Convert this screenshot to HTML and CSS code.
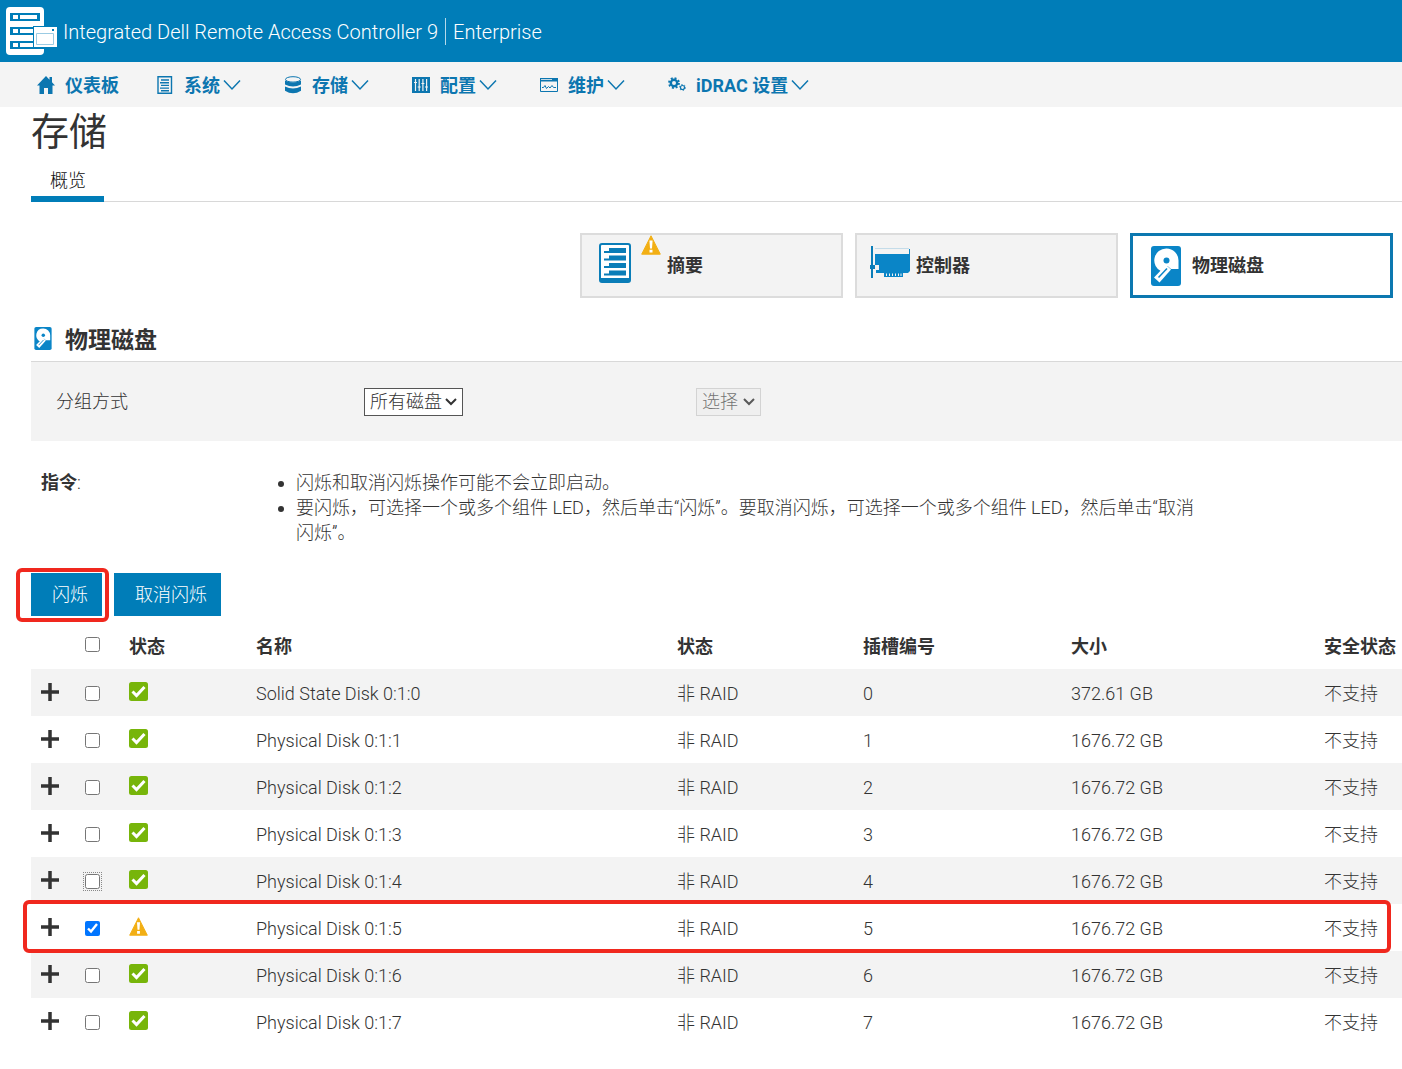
FILE: index.html
```html
<!DOCTYPE html>
<html lang="zh-CN">
<head>
<meta charset="utf-8">
<meta name="viewport" content="width=device-width, initial-scale=1">
<title>iDRAC9 - 存储</title>
<link rel="stylesheet" href="styles.css">
</head>
<body>
<svg class="sprite" aria-hidden="true">
  <symbol id="i-chevron" viewBox="0 0 18 12"><path d="M1 1.5l8 8.5 8-8.5" fill="none" stroke="currentColor" stroke-width="1.5"/></symbol>
  <symbol id="i-plus" viewBox="0 0 18 18"><path d="M9 0v18M0 9h18" stroke="currentColor" stroke-width="3.500"/></symbol>
  <symbol id="i-ok" viewBox="0 0 19 19"><rect width="19" height="19" rx="2.500" fill="#77b50a"/><path d="M3.500 9.500l4 4 8-8.600" fill="none" stroke="#fff" stroke-width="3"/></symbol>
  <symbol id="i-warn" viewBox="0 0 20 20"><path d="M10 .8L19.300 19.200H.7z" fill="#f2af14" stroke="#f2af14" stroke-width="1" stroke-linejoin="round"/><path d="M8.400 5.500h3.200l-.6 8H9zM8.500 14.800h3v2.700h-3z" fill="#fff"/></symbol>
  <symbol id="i-disk" viewBox="0 0 30 40"><rect width="30" height="40" rx="3" fill="#0a85c7"/><path d="M15.500 2.500A12 12 0 0 1 27.500 14.500V23H20l-3.500-3-6 5.500A12 12 0 0 1 15.500 2.500z" fill="#fff"/><path d="M3 31.500L15 19l5 4.500L8.500 36.500z" fill="#fff"/><path d="M7.500 31.500l8.500-9" stroke="#0a85c7" stroke-width="1.500"/><circle cx="15.500" cy="14.500" r="3" fill="#0a85c7"/></symbol>
</svg>

<header class="topbar">
  <svg class="logo" viewBox="0 0 51 48" aria-hidden="true">
    <rect width="38" height="48" rx="4" fill="#fff"/>
    <path d="M4 6h30v8H4zM4 20h30v8H4zM4 34h30v8H4z" fill="#007db8"/>
    <path d="M7 8h5v4H7zM14 8h17v4H14zM7 22h5v4H7zM14 22h13v4H14zM7 36h5v4H7zM14 36h13v4H14z" fill="#fff"/>
    <path d="M27 19h24v22H27zM34 40h5v2h-5z" fill="#007db8"/>
    <rect x="28" y="20" width="23" height="20" fill="#fff"/>
    <path d="M30.500 26.500h17v11h-17z" fill="none" stroke="#9bcbe3"/><path d="M46 22h2v2h-2z" fill="#007db8"/>
  </svg>
  <span class="product">Integrated Dell Remote Access Controller 9</span>
  <span class="edition">Enterprise</span>
</header>

<nav class="menu">
  <a href="#"><svg viewBox="0 0 18 18" class="ico"><path d="M9 0L0 9.500h2.500V18H7v-6h4v6h4.500V9.500H18l-3-3.200V1h-2.500v2.700z" fill="currentColor"/></svg>仪表板</a>
  <a href="#"><svg viewBox="0 0 18 18" class="ico"><path d="M2 .7h13.500v16.600H2zM5 4h8M4 6.700h9M5 9.400h8M4 12.100h9M5 14.800h8" fill="none" stroke="currentColor" stroke-width="1.400"/></svg>系统<svg class="chev"><use href="#i-chevron"/></svg></a>
  <a href="#"><svg viewBox="0 0 18 18" class="ico"><ellipse cx="9" cy="3.400" rx="7.500" ry="2.700" fill="none" stroke="currentColor"/><path d="M1 4.500q8 4 16 0v4q-8 4-16 0zM1 10.500q8 4 16 0v4.200q-8 5-16 0z" fill="currentColor"/></svg>存储<svg class="chev"><use href="#i-chevron"/></svg></a>
  <a href="#"><svg viewBox="0 0 18 18" class="ico"><path d="M0 1h18v16H0z" fill="currentColor"/><path d="M3.500 3v12M7.200 3v12M10.900 3v12M14.600 3v12M2 6.500h3M5.700 11h3M9.400 7.500h3M13 11h3" stroke="#f2f2f2" stroke-width="1.200"/></svg>配置<svg class="chev"><use href="#i-chevron"/></svg></a>
  <a href="#"><svg viewBox="0 0 18 18" class="ico"><path d="M.5 2.500h17v13H.5z" fill="none" stroke="currentColor"/><path d="M0 2h18v3.500H0z" fill="currentColor"/><path d="M1 3.500h11" stroke="#f2f2f2" stroke-width=".8"/><path d="M2 11.500h1.500l1.500-2 1.500 3 2-2 1.500 1.500 2-2.500 1.500 2H16" fill="none" stroke="currentColor"/></svg>维护<svg class="chev"><use href="#i-chevron"/></svg></a>
  <a href="#"><svg viewBox="0 0 18 18" class="ico"><circle cx="6" cy="7" r="3.200" fill="none" stroke="currentColor" stroke-width="2.400"/><circle cx="6" cy="7" r="4.900" fill="none" stroke="currentColor" stroke-width="2" stroke-dasharray="1.950 1.900"/><circle cx="14.500" cy="11.500" r="2" fill="none" stroke="currentColor" stroke-width="1.200"/><circle cx="14.500" cy="11.500" r="3" fill="none" stroke="currentColor" stroke-dasharray="1.200 1.940"/></svg>iDRAC 设置<svg class="chev"><use href="#i-chevron"/></svg></a>
</nav>

<main class="page">
  <h1>存储</h1>
  <div class="tabs"><a class="tab" href="#">概览</a></div>

  <div class="tiles">
    <button class="tile" type="button">
      <span class="tile-icon wide"><svg viewBox="0 0 32 40" width="32" height="40"><rect x="1" y="1" width="30" height="38" rx="2" fill="#fff" stroke="#0a7db8" stroke-width="2"/><path d="M1 35h30v4H1z" fill="#0a7db8"/><path d="M10 5h17v5H5V8h5zM10 12.500h17v5H5v-2h5zM10 20h17v5H5v-2h5zM10 27.500h17v5H5v-2h5z" fill="#0a7db8"/></svg><svg class="alert"><use href="#i-warn"/></svg></span>摘要</button>
    <button class="tile" type="button">
      <span class="tile-icon card"><svg viewBox="0 0 40 32" width="40" height="32"><path d="M1 0h2v32H1zM0 19h5v4H0z" fill="#0a7db8"/><path d="M5 2.500h34" fill="none" stroke="#c4dce9"/><path d="M5 8h34V3h1v22l-2 2h-5v4H14v-4H6v-3h3v-5H5z" fill="#0a85c7"/><path d="M16.500 27.500v2.500M19.500 27.500v2.500M22.500 27.500v2.500M25.500 27.500v2.500M28.500 27.500v2.500M31 27.500v2.500" stroke="#f2f2f2"/></svg></span>控制器</button>
    <button class="tile active" type="button">
      <span class="tile-icon disk"><svg width="30" height="40"><use href="#i-disk"/></svg></span>物理磁盘</button>
  </div>

  <h2><svg width="18" height="23"><use href="#i-disk"/></svg>物理磁盘</h2>
  <div class="filter">
    <label for="group">分组方式</label>
    <select id="group"><option>所有磁盘</option></select>
    <select aria-label="选择" disabled><option>选择</option></select>
  </div>

  <div class="notes">
    <div><strong>指令</strong>:</div>
    <ul>
      <li>闪烁和取消闪烁操作可能不会立即启动。</li>
      <li>要闪烁，可选择一个或多个组件 LED，然后单击“闪烁”。要取消闪烁，可选择一个或多个组件 LED，然后单击“取消闪烁”。</li>
    </ul>
  </div>

  <div class="actions">
    <button class="marked" type="button">闪烁</button>
    <button type="button">取消闪烁</button>
  </div>

  <table>
    <colgroup><col class="c-exp"><col class="c-chk"><col class="c-health"><col><col class="c-state"><col class="c-slot"><col class="c-size"><col class="c-sec"></colgroup>
    <thead><tr><th></th><th><input type="checkbox" aria-label="全选"></th><th>状态</th><th>名称</th><th>状态</th><th>插槽编号</th><th>大小</th><th>安全状态</th></tr></thead>
    <tbody>
      <tr><td><button class="expand" type="button" aria-label="展开"><svg><use href="#i-plus"/></svg></button></td><td><input type="checkbox" aria-label="0:1:0"></td><td><svg class="health"><use href="#i-ok"/></svg></td><td>Solid State Disk 0:1:0</td><td>非 RAID</td><td>0</td><td>372.61 GB</td><td>不支持</td></tr>
      <tr><td><button class="expand" type="button" aria-label="展开"><svg><use href="#i-plus"/></svg></button></td><td><input type="checkbox" aria-label="0:1:1"></td><td><svg class="health"><use href="#i-ok"/></svg></td><td>Physical Disk 0:1:1</td><td>非 RAID</td><td>1</td><td>1676.72 GB</td><td>不支持</td></tr>
      <tr><td><button class="expand" type="button" aria-label="展开"><svg><use href="#i-plus"/></svg></button></td><td><input type="checkbox" aria-label="0:1:2"></td><td><svg class="health"><use href="#i-ok"/></svg></td><td>Physical Disk 0:1:2</td><td>非 RAID</td><td>2</td><td>1676.72 GB</td><td>不支持</td></tr>
      <tr><td><button class="expand" type="button" aria-label="展开"><svg><use href="#i-plus"/></svg></button></td><td><input type="checkbox" aria-label="0:1:3"></td><td><svg class="health"><use href="#i-ok"/></svg></td><td>Physical Disk 0:1:3</td><td>非 RAID</td><td>3</td><td>1676.72 GB</td><td>不支持</td></tr>
      <tr><td><button class="expand" type="button" aria-label="展开"><svg><use href="#i-plus"/></svg></button></td><td><input class="focused" type="checkbox" aria-label="0:1:4"></td><td><svg class="health"><use href="#i-ok"/></svg></td><td>Physical Disk 0:1:4</td><td>非 RAID</td><td>4</td><td>1676.72 GB</td><td>不支持</td></tr>
      <tr class="marked-row"><td><button class="expand" type="button" aria-label="展开"><svg><use href="#i-plus"/></svg></button></td><td><input type="checkbox" aria-label="0:1:5" checked></td><td><svg class="health"><use href="#i-warn"/></svg></td><td>Physical Disk 0:1:5</td><td>非 RAID</td><td>5</td><td>1676.72 GB</td><td>不支持</td></tr>
      <tr><td><button class="expand" type="button" aria-label="展开"><svg><use href="#i-plus"/></svg></button></td><td><input type="checkbox" aria-label="0:1:6"></td><td><svg class="health"><use href="#i-ok"/></svg></td><td>Physical Disk 0:1:6</td><td>非 RAID</td><td>6</td><td>1676.72 GB</td><td>不支持</td></tr>
      <tr><td><button class="expand" type="button" aria-label="展开"><svg><use href="#i-plus"/></svg></button></td><td><input type="checkbox" aria-label="0:1:7"></td><td><svg class="health"><use href="#i-ok"/></svg></td><td>Physical Disk 0:1:7</td><td>非 RAID</td><td>7</td><td>1676.72 GB</td><td>不支持</td></tr>
    </tbody>
  </table>
</main>
</body>
</html>
```
FILE: styles.css
```css
* { box-sizing: border-box; }
body {
  margin: 0;
  background: #fff;
  color: #333;
  font: 300 18px/25px Roboto, "Noto Sans CJK SC", sans-serif;
}
button, select { font: inherit; color: inherit; }
button { cursor: pointer; }
strong { font-weight: 700; }
svg { display: block; flex: none; }
.sprite { position: absolute; width: 0; height: 0; }

.topbar {
  display: flex;
  align-items: center;
  height: 62px;
  padding: 0 6px;
  background: #007db8;
  color: #fff;
  font-size: 20px;
}
.logo { width: 51px; height: 48px; }
.product { padding: 2px 7px 0 6px; }
.edition { padding: 2px 7px 0; border-left: 1px solid #b5d9ea; }

.menu {
  display: flex;
  gap: 37px;
  padding: 0 37px;
  background: #f4f4f4;
}
.menu a {
  display: flex;
  align-items: center;
  height: 45px;
  padding-top: 1px;
  color: #0c76b0;
  font-weight: 700;
  text-decoration: none;
}
.ico { width: 18px; height: 18px; margin-right: 10px; }
.chev { width: 18px; height: 12px; margin: 0 6px 0 3px; }

.page { padding-left: 31px; }
h1 { margin: 0; font-size: 38px; font-weight: 400; line-height: 50px; }
.tabs { display: flex; box-shadow: inset 0 -1px #d8d8d8; }
.tab {
  padding: 11px 18px 3px 19px;
  border-bottom: 6px solid #007db8;
  color: #111;
  text-decoration: none;
}

.tiles {
  display: flex;
  justify-content: flex-end;
  gap: 12px;
  padding: 31px 9px 0 0;
}
.tile {
  display: flex;
  align-items: center;
  width: 263px;
  height: 65px;
  padding: 0 0 0 12px;
  border: 2px solid #dcdcdc;
  background: #f3f3f3;
  font-weight: 700;
}
.tile.active { padding-left: 11px; border: 3px solid #0c78b0; background: #fff; }
.tile-icon { display: flex; }
.wide { align-self: flex-start; padding: 8px 6px 0 5px; }
.alert { width: 20px; height: 20px; margin: -8px 0 0 10px; }
.card { padding: 0 6px 8px 1px; }
.disk { padding: 0 11px 0 7px; }

h2 {
  display: flex;
  align-items: center;
  gap: 13px;
  margin: 22px 0 0;
  padding: 0 3px;
  height: 42px;
  border-bottom: 1px solid #d8d8d8;
  font-size: 23px;
  font-weight: 700;
}
h2 svg { margin-bottom: 4px; }
.filter {
  display: grid;
  grid-template-columns: 308px 332px 1fr;
  align-items: center;
  justify-items: start;
  height: 79px;
  padding-left: 25px;
  background: #f3f3f3;
}
select {
  appearance: none;
  min-width: 65px;
  height: 28px;
  padding: 0 20px 0 5px;
  border: 1px solid #555;
  border-radius: 0;
  background: #fff url("data:image/svg+xml,%3Csvg xmlns='http://www.w3.org/2000/svg' width='12' height='8'%3E%3Cpath d='M1 1l5 5 5-5' fill='none' stroke='%23333' stroke-width='2'/%3E%3C/svg%3E") no-repeat right 5px center;
}
select:disabled { border-color: #ccc; background-color: #efefef; color: #555; opacity: .8; }

.notes {
  display: grid;
  grid-template-columns: 255px 1fr;
  padding: 29px 200px 28px 10px;
}
.notes ul { margin: 0; padding: 0; }

.actions { display: flex; gap: 12px; padding-bottom: 6px; }
.actions button {
  position: relative;
  height: 43px;
  padding: 0 14px 0 21px;
  border: 0;
  background: #007db8;
  color: #fff;
}
.marked::after,
.marked-row td:last-child::after {
  content: "";
  position: absolute;
  border: 4px solid #f0281e;
  border-radius: 6px;
  pointer-events: none;
}
.marked::after { inset: -5px -7px -6px -15px; }
.marked-row { position: relative; }
.marked-row td:last-child::after { inset: -4px 11px -2px -8px; }

table { width: 100%; border-collapse: collapse; table-layout: fixed; }
.c-exp, .c-chk { width: 44px; }
.c-health { width: 127px; }
.c-state { width: 186px; }
.c-slot { width: 208px; }
.c-size { width: 253px; }
.c-sec { width: 88px; }
tr { height: 47px; }
th, td { padding: 2px 0 0 10px; text-align: left; white-space: nowrap; }
th { font-weight: 700; }
tbody tr:nth-child(odd) { background: #f3f3f3; }
input[type="checkbox"] { display: block; width: 15px; height: 15px; margin: 0; }
thead input[type="checkbox"] { margin-bottom: 4px; }
.focused { outline: 1px dotted #888; outline-offset: 1px; }
.expand { display: block; margin-bottom: 4px; padding: 0; border: 0; background: none; }
.expand svg { width: 18px; height: 18px; }
.health { width: 19px; height: 19px; margin-bottom: 5px; }
```
